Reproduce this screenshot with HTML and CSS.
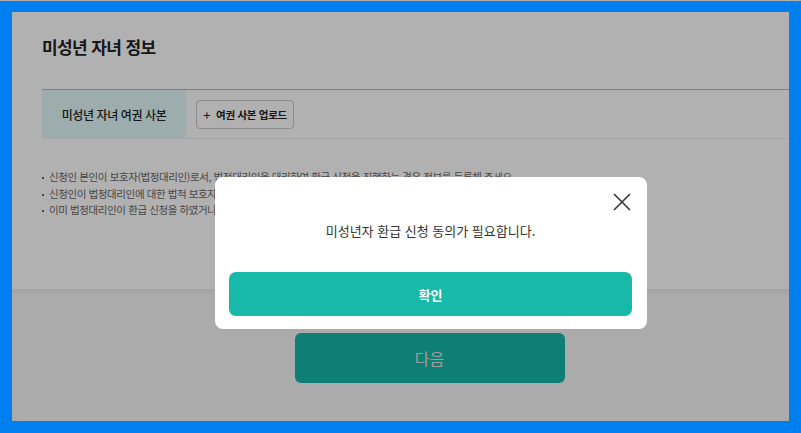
FILE: index.html
```html
<!DOCTYPE html>
<html lang="ko">
<head>
<meta charset="utf-8">
<title>미성년 자녀 정보</title>
<link rel="stylesheet" href="styles.css">
</head>
<body>
<div class="frame">
  <div class="screen">
    <section class="card">
      <h2 class="title">미성년 자녀 정보</h2>
      <div class="row">
        <div class="row-label">미성년 자녀 여권 사본</div>
        <div class="row-value">
          <button class="upload-btn" type="button"><span class="plus">+</span>여권 사본 업로드</button>
        </div>
      </div>
      <ul class="notes">
        <li>신청인 본인이 보호자(법정대리인)로서, 법정대리인을 대리하여 환급 신청을 진행하는 경우 정보를 등록해 주세요.</li>
        <li>신청인이 법정대리인에 대한 법적 보호자 지위를 증명할 수 있는 서류를 함께 제출해 주세요.</li>
        <li>이미 법정대리인이 환급 신청을 하였거나, 미성년 자녀 본인이 신청한 경우 중복 신청이 불가합니다.</li>
      </ul>
    </section>
    <footer class="footer">
      <button class="next-btn" type="button">다음</button>
    </footer>
    <div class="dim"></div>
    <div class="modal" role="dialog">
      <button class="close-btn" type="button" aria-label="닫기">
        <svg width="20" height="20" viewBox="0 0 20 20"><path d="M2 2 L18 18 M18 2 L2 18" stroke="#333" stroke-width="1.6" fill="none"/></svg>
      </button>
      <p class="modal-msg">미성년자 환급 신청 동의가 필요합니다.</p>
      <button class="confirm-btn" type="button">확인</button>
    </div>
  </div>
</div>
</body>
</html>
```

FILE: styles.css
```css
* { box-sizing: border-box; }
html, body { margin: 0; padding: 0; }
body {
  font-family: "Noto Sans CJK KR", "Noto Sans", sans-serif;
  background: #0080f0;
  border-top: 1px solid #b0b0b0;
  width: 801px;
  height: 433px;
  overflow: hidden;
}
.frame {
  padding: 11px 12px 12px 12px;
}
.screen {
  position: relative;
  width: 777px;
  height: 409px;
  overflow: hidden;
  display: flex;
  flex-direction: column;
}
.card {
  background: #ffffff;
  height: 277px;
  padding: 23px 0 0 30px;
}
.title {
  margin: 0;
  font-size: 17px;
  line-height: 24px;
  font-weight: 700;
  color: #222;
  letter-spacing: -0.6px;
}
.row {
  margin-top: 30px;
  display: flex;
  height: 50px;
  border-top: 1px solid #b7b7b7;
  border-bottom: 1px solid #efefef;
}
.row-label {
  width: 144px;
  background: #e3f9f9;
  display: flex;
  align-items: center;
  justify-content: center;
  font-size: 12px;
  font-weight: 500;
  color: #222;
  letter-spacing: -0.4px;
}
.row-value {
  display: flex;
  align-items: center;
  padding-left: 10px;
}
.upload-btn {
  width: 98px;
  height: 29px;
  border: 1px solid #c8c8c8;
  border-radius: 4px;
  background: #fff;
  font-family: inherit;
  font-size: 10.5px;
  font-weight: 700;
  color: #222;
  letter-spacing: -0.3px;
  display: flex;
  align-items: center;
  justify-content: center;
  padding: 0;
}
.plus {
  font-size: 13px;
  font-weight: 400;
  margin-right: 6px;
  line-height: 1;
}
.notes {
  list-style: none;
  margin: 30px 0 0 0;
  padding: 0;
}
.notes li {
  position: relative;
  padding-left: 7px;
  font-size: 10.5px;
  line-height: 16.5px;
  color: #666;
  letter-spacing: -0.4px;
  white-space: nowrap;
}
.notes li::before {
  content: "";
  position: absolute;
  left: 0;
  top: 8px;
  width: 2px;
  height: 2px;
  background: #666;
}
.footer {
  flex: 1;
  background: #f7f7f7;
  box-shadow: inset 0 6px 6px -4px rgba(0,0,0,0.08);
  display: flex;
  justify-content: center;
  align-items: flex-start;
  padding: 44px 0 0 58px;
}
.next-btn {
  width: 270px;
  height: 50px;
  border: none;
  border-radius: 6px;
  background: #14b7a8;
  color: #e6e6e6;
  font-family: inherit;
  font-size: 16px;
  font-weight: 400;
}
.dim {
  position: absolute;
  inset: 0;
  background: rgba(0,0,0,0.305);
}
.modal {
  position: absolute;
  left: 203px;
  top: 165px;
  width: 432px;
  height: 152px;
  background: #fff;
  border-radius: 8px;
  padding: 44px 15px 13px 14px;
  display: flex;
  flex-direction: column;
}
.close-btn {
  position: absolute;
  top: 15px;
  right: 15px;
  width: 20px;
  height: 20px;
  padding: 0;
  border: none;
  background: none;
}
.close-btn svg { display: block; }
.modal-msg {
  margin: 0;
  text-align: center;
  font-size: 13px;
  line-height: 20px;
  color: #333;
}
.confirm-btn {
  margin-top: 31px;
  height: 44px;
  border: none;
  border-radius: 7px;
  background: #17b9a8;
  color: #fff;
  font-family: inherit;
  font-size: 13px;
  font-weight: 700;
}
```
